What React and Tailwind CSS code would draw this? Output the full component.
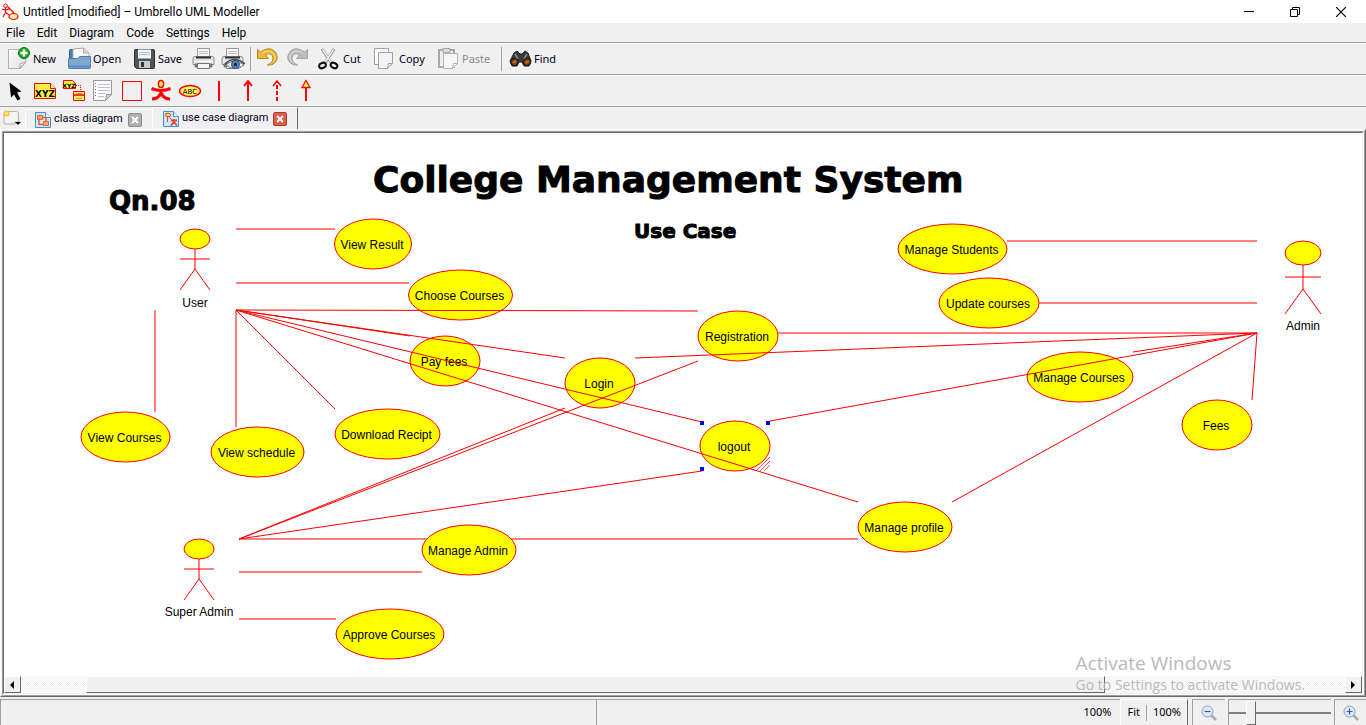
import React from "react";

const RED = "#ff0000";

const useCases = [
  ["View Result", 373, 244, 38.5, 25],
  ["Choose Courses", 460.5, 295, 52, 25],
  ["Pay fees", 445, 361, 35, 25],
  ["Login", 600, 383, 35, 25],
  ["Registration", 738, 336, 40, 25],
  ["View Courses", 125.5, 437, 44.5, 25],
  ["View schedule", 257.5, 452, 46.5, 25],
  ["Download Recipt", 387.5, 434, 52.5, 25],
  ["logout", 735, 446, 35, 25],
  ["Manage profile", 905, 527, 47, 25],
  ["Manage Admin", 469, 550, 47, 25],
  ["Approve Courses", 390, 634, 54, 25],
  ["Manage Students", 952.5, 249, 54.5, 25],
  ["Update courses", 989, 303, 50, 25],
  ["Manage Courses", 1080, 377, 53, 25],
  ["Fees", 1217, 425, 35, 25],
];

const linesBehind = [[239, 539, 858, 539]];

const links = [
  [236, 229, 335, 229],
  [236, 283, 409, 283],
  [236, 310, 698, 311],
  [236, 310, 410, 336],
  [236, 310, 565, 358],
  [236, 310, 702, 422],
  [236, 310, 858, 502],
  [236, 310, 335, 409],
  [236, 310, 236, 427],
  [155, 310, 155, 412],
  [239, 539, 565, 408],
  [239, 539, 698, 361],
  [239, 539, 702, 471],
  [239, 572, 422, 572],
  [239, 619, 336, 619],
  [1007, 241, 1257, 241],
  [1039, 303, 1257, 303],
  [778, 333, 1257, 333],
  [635, 358, 1257, 333],
  [770, 421, 1257, 333],
  [1133, 352, 1257, 333],
  [952, 502, 1257, 333],
  [1252, 400, 1257, 333],
];

const actors = [
  ["User", 195, 229, 10, 302],
  ["Super Admin", 199, 539, 10, 611],
  ["Admin", 1303, 241, 12, 325],
];

function Line({ p }) {
  return <line x1={p[0]} y1={p[1]} x2={p[2]} y2={p[3]} stroke={RED} />;
}

function Actor({ name, x, top, u, labelY }) {
  const w = u === 12 ? 18 : 15;
  return (
    <g stroke={RED} fill="none">
      <ellipse cx={x} cy={top + u} rx={w} ry={u} fill="#ffff00" />
      <path d={`M${x} ${top + 2 * u}V${top + 4 * u}M${x - w} ${top + 3 * u}H${x + w}M${x - w} ${top + 6 * u + 1}L${x} ${top + 4 * u}L${x + w} ${top + 6 * u + 1}`} />
      <text x={x} y={labelY + 5} textAnchor="middle" fill="#000" stroke="none">{name}</text>
    </g>
  );
}

function Diagram() {
  return (
    <svg role="img" aria-label="Use case diagram" width="1358" height="543" viewBox="4 133 1358 543" className="absolute top-0 left-0 font-['Liberation_Sans',sans-serif] text-[12px]">
      {linesBehind.map((p, i) => <Line key={i} p={p} />)}
      {useCases.map(([n, x, y, rx, ry]) => (
        <g key={n}>
          <ellipse cx={x} cy={y} rx={rx} ry={ry} fill="#ffff00" stroke={RED} />
          <text x={x - 1} y={y + 5} textAnchor="middle">{n}</text>
        </g>
      ))}
      {links.map((p, i) => <Line key={i} p={p} />)}
      {actors.map(([n, x, t, u, l]) => <Actor key={n} name={n} x={x} top={t} u={u} labelY={l} />)}
      <path d="M756 471L770 457M760 471L770 461M764 471L770 465" stroke="#ff0000" strokeOpacity=".7" />
      <g fill="#0000ff">
        <rect x="700" y="421" width="4" height="4" />
        <rect x="766" y="421" width="4" height="4" />
        <rect x="700" y="467" width="4" height="4" />
      </g>
    </svg>
  );
}

function Svg({ w = 24, h = 24, children }) {
  return <svg width={w} height={h} viewBox={`0 0 ${w} ${h}`} fill="none" className="shrink-0" aria-hidden="true">{children}</svg>;
}

const AppIcon = () => (
  <Svg w={18} h={18}>
    <circle cx="3.500" cy="2.800" r="1.800" stroke={RED} />
    <path d="M3.500 4.500v5M0 6l3.500 1L8 5.500M3.500 9.500L1 14M3.500 9.500L8 12.500M5.500 3.500L12 10" stroke={RED} strokeWidth="1.200" />
    <ellipse cx="11.500" cy="13.500" rx="4.500" ry="3" fill="#fff3a0" stroke={RED} strokeWidth="1.200" />
  </Svg>
);
const NewIcon = () => (
  <Svg>
    <defs><linearGradient id="sheet" x1="0" y1="0" x2="1" y2="1"><stop stopColor="#ffffff" /><stop offset="1" stopColor="#dedede" /></linearGradient></defs>
    <path d="M.5 2.500h17v13l-5 6H.5z" fill="url(#sheet)" stroke="#b0b0b0" />
    <path d="M11.500 21.500l1-5 5-1z" fill="#f2f2f2" stroke="#a6a6a6" />
    <circle cx="16" cy="6" r="5.500" fill="#25a528" stroke="#0c7a10" />
    <path d="M16 2.500v7M12.500 6h7" stroke="#fff" strokeWidth="2.400" />
  </Svg>
);
const OpenIcon = () => (
  <Svg>
    <path d="M1.500 13V3.500q0-1 1-1H7l1.500 2h11V13z" fill="#4f7cac" stroke="#355f91" />
    <path d="M5 13V2l11-1 5 5v7z" fill="#fbfbfb" stroke="#a9a9a9" />
    <path d="M15.500 1v5H21" fill="#ddd" stroke="#a9a9a9" />
    <path d="M.5 11.500h9l2-2h11v11q0 1-1 1h-20q-1 0-1-1z" fill="#7ea8d2" stroke="#4f7eb2" />
    <path d="M1 19.500h21" stroke="#5b89ba" strokeWidth="2" />
  </Svg>
);
const SaveIcon = () => (
  <Svg>
    <path d="M2 2.500h18.500q1 0 1 1v17q0 1-1 1h-17l-2-2v-16q0-1 .5-1z" fill="#50545a" stroke="#303236" />
    <path d="M5 2.500h13v9H5z" fill="#f4f8fc" />
    <path d="M6 5.500h11M6 7.500h11" stroke="#a8c4e4" />
    <path d="M6 14h11v7H6z" fill="#c8c8c8" />
    <path d="M8 15h3v5H8z" fill="#333" />
  </Svg>
);
function PrintIcon({ eye }) {
  return (
    <Svg>
      <path d="M5.500 1.500h12v9h-12z" fill="#f7f7f7" stroke="#999" />
      <path d="M7 4.500h9M7 6.500h9" stroke="#bbb" />
      <path d="M3 9.500h17q2 0 2 2v6H1v-6q0-2 2-2z" fill="#e2e2e2" stroke="#8d8d8d" />
      <path d="M4 10.500h15" stroke="#333" strokeWidth="2" />
      <path d="M2 14.500h19" stroke="#fff" />
      <path d="M3 17h17v3H3z" fill="#777" stroke="#777" />
      <path d="M5.500 16.500h12v5h-12z" fill="#f4f4f4" stroke="#777" />
      {eye && <><path d="M5 18q8-8 18 0-9 7-18 0z" fill="#eee" stroke="#777" /><circle cx="14.500" cy="17.500" r="4" fill="#4f8cc4" stroke="#224f80" /><circle cx="14.500" cy="17.500" r="1.700" fill="#10243c" /><path d="M4 17q9-9 20 0" stroke="#444" strokeWidth="1.500" /></>}
    </Svg>
  );
}
function UndoIcon({ redo }) {
  const c = redo ? "#bcbcbc" : "#e9b93c";
  const s = redo ? "#a4a4a4" : "#b98812";
  return (
    <Svg>
      <g transform={redo ? "translate(24 0) scale(-1 1)" : undefined}>
        <path d="M1.500 2.500l3 2.500q8-6 14-1 5 6 1 11-3 4-8 3 7-3 5-9-3-4-7-1l3 3.500h-11z" fill={c} stroke={s} strokeLinejoin="round" />
        <path d="M6 6q7-4 11 0 4 5 0 9" stroke="#ffffff" strokeOpacity=".5" />
      </g>
    </Svg>
  );
}
const CutIcon = () => (
  <Svg>
    <path d="M4 2l9.500 14M16 2L7 16" stroke="#888" strokeWidth="3" />
    <path d="M4.500 2.500l9 13M15.500 2.500l-8.500 13" stroke="#eee" strokeWidth="1.600" />
    <ellipse cx="4.500" cy="18.500" rx="3.500" ry="2.500" transform="rotate(-25 4.500 18.500)" stroke="#111" strokeWidth="2" />
    <ellipse cx="16" cy="18.500" rx="3.500" ry="2.500" transform="rotate(25 16 18.500)" stroke="#111" strokeWidth="2" />
  </Svg>
);
const CopyIcon = () => (
  <Svg>
    <path d="M.5 1.500h14v16H.5z" fill="#fafafa" stroke="#a0a0a0" />
    <path d="M4.500 5.500h14v11l-5 5h-9z" fill="#f3f3f3" stroke="#a0a0a0" />
    <path d="M13.500 21.500l1-5 4 0z" fill="#fff" stroke="#a0a0a0" />
  </Svg>
);
const PasteIcon = () => (
  <Svg>
    <path d="M2 3h15v17H2z" fill="#eee" stroke="#a8a8a8" strokeWidth="2" />
    <path d="M6 1.500h7v4H6z" fill="#ddd" stroke="#a8a8a8" />
    <path d="M6.500 6.500h14v10l-5 5h-9z" fill="#f6f6f6" stroke="#b4b4b4" />
    <path d="M15.500 21.500l1-5h4z" fill="#fff" stroke="#b4b4b4" />
  </Svg>
);
const FindIcon = () => (
  <Svg>
    <path d="M5 6l3-2 3 3h2l3-3 3 2 3 8-2 5h-5l-2-4h-3l-2 4H3l-2-5z" fill="#3a3a3a" stroke="#222" />
    <path d="M6 7l3 5M18 7l-3 5" stroke="#888" strokeWidth="1.500" />
    <circle cx="5.500" cy="15" r="3.500" fill="#8a4512" stroke="#222" strokeWidth="1.500" />
    <circle cx="18" cy="15" r="3.500" fill="#8a4512" stroke="#222" strokeWidth="1.500" />
    <path d="M4 16l3-2M16.500 16l3-2" stroke="#d0803c" strokeWidth="1.500" />
  </Svg>
);

const SelectTool = () => <Svg><path d="M5.500 3.500l12 9-4.500 1 3.500 6.500-3 1.500-3.500-6-3 3z" fill="#000" /></Svg>;
const XyzTool = () => (
  <Svg>
    <path d="M1.500 4.500h16l5 5v10h-21z" fill="#ffee44" stroke={RED} />
    <path d="M17.500 4.500v5h5" fill="#ffffaa" stroke={RED} />
    <text x="12" y="18" textAnchor="middle" fontSize="9" fontWeight="bold" fill="#000" fontFamily="DejaVu Sans">XYZ</text>
  </Svg>
);
const AnchorTool = () => (
  <Svg>
    <path d="M1.500 1.500h9l3 3v5h-12z" fill="#ffee44" stroke={RED} />
    <text x="7" y="9" textAnchor="middle" fontSize="6" fontWeight="bold" fill="#000" fontFamily="DejaVu Sans">XYZ</text>
    <path d="M14 6.500h4.500v6" stroke={RED} strokeDasharray="1 1" />
    <path d="M11.500 12.500h11v9h-11z" fill="#ffee66" stroke={RED} />
    <path d="M11.500 16h11" stroke={RED} strokeWidth="1.500" />
    <path d="M14 14.500h6M14 19.500h6" stroke="#c79a30" />
  </Svg>
);
const NoteTool = () => (
  <Svg>
    <path d="M2.500 1.500h18v14l-6 6h-12z" fill="#fbfbfb" stroke="#999" />
    <path d="M14.500 21.500l1-6h5z" fill="#ccc" stroke="#999" />
    <path d="M7 5.500h12M7 8.500h12M7 11.500h12M7 14.500h8M7 17.500h6" stroke="#bcc2d0" />
    <path d="M4.500 4v15" stroke="#777" strokeDasharray="1 2" />
  </Svg>
);
const BoxTool = () => <Svg><path d="M2.500 2.500h19v19h-19z" stroke={RED} /></Svg>;
const ActorTool = () => (
  <Svg>
    <path d="M2.500 9.500q9.500 4 19 0M12 10v5M12 14q-3 6-9 6M12 14q3 6 9 6" stroke={RED} strokeWidth="3" />
    <ellipse cx="12" cy="5" rx="2.600" ry="3.500" fill="#ffee44" stroke={RED} strokeWidth="1.400" />
  </Svg>
);
const UseCaseTool = () => (
  <Svg>
    <ellipse cx="12" cy="12" rx="10.500" ry="5.500" fill="#ffee66" stroke={RED} strokeWidth="1.400" />
    <text x="12" y="14.500" textAnchor="middle" fontSize="7" fill="#000" fontFamily="DejaVu Sans">ABC</text>
  </Svg>
);
const LineTool = () => <Svg><path d="M12 2v20" stroke={RED} strokeWidth="2" /></Svg>;
const ArrowTool = () => <Svg><path d="M12 2v20M8 7l4-5 4 5" stroke={RED} strokeWidth="2" /></Svg>;
const DashTool = () => <Svg><path d="M12 22v-20" stroke={RED} strokeWidth="2" strokeDasharray="4 2" /><path d="M8 7l4-5 4 5" stroke={RED} strokeWidth="1.500" /></Svg>;
const GeneralTool = () => <Svg><path d="M12 8v14" stroke={RED} strokeWidth="2" /><path d="M8 8.500l4-7 4 7z" fill="#ffff55" stroke={RED} strokeWidth="1.300" /></Svg>;

const NewTabIcon = () => (
  <Svg w={18} h={16}>
    <path d="M3 1.500h10.500q2 0 2 2V12H12v2H2.500q-1.500 0-1.500-2V4" fill="#f4f4f4" stroke="#b0b0b0" />
    <circle cx="3.500" cy="3.500" r="3" fill="#f5c533" />
    <circle cx="3.500" cy="3.500" r="1.300" fill="#fff0a8" />
    <path d="M12 12h6l-3 3z" fill="#000" />
  </Svg>
);
function DiagramIcon({ useCase }) {
  return (
    <Svg w={16} h={16}>
      <path d="M.5.500h10l5 5v10H.5z" fill="#cfe7fa" stroke="#3e93d8" />
      <path d="M10.500.500v5h5" fill="#fff" stroke="#3e93d8" />
      {useCase ? (
        <><ellipse cx="5" cy="4" rx="3" ry="1.800" fill="#f6d36b" stroke="#d8552b" /><path d="M4.500 6v5M6 6l3 3" stroke="#e04a2f" /><path d="M11 8v4M8 9.500h6M11 11l-3 3.500M11 11l3 3.500" stroke="#e04a2f" strokeWidth="1.800" /></>
      ) : (
        <><path d="M2.500 3.500h5v4h-5zM8.500 9.500h5v4h-5z" fill="#f9a77c" stroke="#e0622f" /><path d="M4 8v4.500h4M8 5.500h3V9" stroke="#e0622f" strokeWidth="1.500" /></>
      )}
    </Svg>
  );
}
function CloseBadge({ active }) {
  return (
    <Svg w={14} h={14}>
      <rect x=".5" y=".5" width="13" height="13" rx="1.500" fill={active ? "#dd5f4b" : "#b0b0b0"} stroke={active ? "#b23a28" : "#8e8e8e"} />
      <path d="M4 4l6 6M10 4l-6 6" stroke="#fff" strokeWidth="2" />
    </Svg>
  );
}
function ZoomIcon({ plus }) {
  return (
    <Svg w={16} h={16}>
      <path d="M10 10l5 5" stroke="#aaa" strokeWidth="2.500" />
      <circle cx="6.500" cy="6.500" r="5.500" fill="#dceaf8" stroke="#8aa0bb" />
      <path d={plus ? "M3.500 6.500h6M6.500 3.500v6" : "M3.500 6.500h6"} stroke="#2f5fa8" strokeWidth="1.200" />
    </Svg>
  );
}

function ToolButton({ icon, label, className = "", disabled }) {
  return (
    <button type="button" disabled={disabled} aria-label={label} className={`flex h-6 items-center gap-[1px] whitespace-nowrap disabled:text-[#8a8a8a] ${className}`}>
      {icon}
      <span>{label}</span>
    </button>
  );
}
function IconButton({ icon, name }) {
  return <button type="button" aria-label={name} className="flex size-6 items-center justify-center">{icon}</button>;
}

const tools = [
  ["Select", <SelectTool />], ["Text", <XyzTool />], ["Anchor", <AnchorTool />], ["Note", <NoteTool />],
  ["Box", <BoxTool />], ["Actor", <ActorTool />], ["Use case", <UseCaseTool />], ["Association", <LineTool />],
  ["Directional association", <ArrowTool />], ["Dependency", <DashTool />], ["Generalization", <GeneralTool />],
];

const headingFace = "absolute font-['DejaVu_Sans',sans-serif] font-bold whitespace-nowrap [-webkit-text-stroke:1px_black]";

export default function App() {
  return (
    <div className="flex h-screen min-h-0 flex-col overflow-hidden bg-[#f0f0f0] font-['Noto_Sans',sans-serif] text-[11px] text-[#000020]">
      <header className="flex h-[23px] shrink-0 items-center bg-white pr-[2px] pl-[2px] font-['Roboto',sans-serif] text-[12px] text-black">
        <AppIcon />
        <h1 className="ml-[3px] grow">Untitled [modified] – Umbrello UML Modeller</h1>
        <button type="button" aria-label="Minimize" className="flex h-full w-[46px] items-center justify-center"><Svg w={10} h={10}><path d="M0 4.500h10" stroke="#000" /></Svg></button>
        <button type="button" aria-label="Restore" className="flex h-full w-[46px] items-center justify-center"><Svg w={10} h={10}><path d="M.5 2.500h7v7h-7zM2.500 2V.500h7v7H8" stroke="#000" /></Svg></button>
        <button type="button" aria-label="Close" className="flex h-full w-[46px] items-center justify-center"><Svg w={10} h={10}><path d="M0 0l10 10M10 0L0 10" stroke="#000" strokeWidth="1.200" /></Svg></button>
      </header>

      <nav className="flex h-5 shrink-0 items-center gap-3 border-b border-[#a0a0a0] pl-[6px] font-['Roboto',sans-serif] text-[12px] text-black">
        {["File", "Edit", "Diagram", "Code", "Settings", "Help"].map((m) => <button type="button" key={m}>{m}</button>)}
      </nav>

      <div className="flex h-8 shrink-0 items-center border-t border-b border-t-white border-b-[#a0a0a0] pl-2">
        <ToolButton icon={<NewIcon />} label="New" className="w-[60px]" />
        <ToolButton icon={<OpenIcon />} label="Open" className="w-[65px]" />
        <ToolButton icon={<SaveIcon />} label="Save" className="w-[59px]" />
        <div className="flex gap-[5px]">
          <IconButton name="Print" icon={<PrintIcon />} />
          <IconButton name="Print preview" icon={<PrintIcon eye />} />
        </div>
        <div className="mx-[5px] h-6 w-px bg-[#a0a0a0]" />
        <div className="flex gap-[5px]">
          <IconButton name="Undo" icon={<UndoIcon />} />
          <IconButton name="Redo" icon={<UndoIcon redo />} />
        </div>
        <ToolButton icon={<CutIcon />} label="Cut" className="ml-[9px] w-[56px]" />
        <ToolButton icon={<CopyIcon />} label="Copy" className="w-[63px]" />
        <ToolButton icon={<PasteIcon />} label="Paste" className="w-[64px]" disabled />
        <div className="h-6 w-px bg-[#a0a0a0]" />
        <ToolButton icon={<FindIcon />} label="Find" className="ml-[7px]" />
      </div>

      <div className="flex h-8 shrink-0 items-center gap-[5px] border-t border-b border-t-white border-b-[#a0a0a0] pl-1">
        {tools.map(([name, icon]) => <IconButton key={name} name={name} icon={icon} />)}
      </div>

      <div role="tablist" className="flex h-[22px] shrink-0 items-stretch pl-[3px] font-['Roboto',sans-serif]">
        <button type="button" aria-label="New tab" className="flex w-[22px] items-center"><NewTabIcon /></button>
        <div className="mt-[2px] flex w-[127px] items-center border-t border-l border-white pl-[9px]">
          <button type="button" role="tab" className="flex items-center gap-[3px] whitespace-nowrap"><DiagramIcon />class diagram</button>
          <button type="button" aria-label="Close class diagram" className="ml-[5px]"><CloseBadge /></button>
        </div>
        <div className="flex w-[146px] items-center border-t border-r border-l border-t-white border-r-[#696969] border-l-white pl-[10px]">
          <button type="button" role="tab" aria-selected="true" className="flex items-center gap-[3px] whitespace-nowrap"><DiagramIcon useCase />use case diagram</button>
          <button type="button" aria-label="Close use case diagram" className="ml-[5px]"><CloseBadge active /></button>
        </div>
      </div>

      <main className="flex min-h-0 grow flex-col border border-t-white border-r-[#696969] border-b-[#696969] border-l-white">
        <div className="flex min-h-0 grow flex-col border border-t-[#f0f0f0] border-r-[#a0a0a0] border-b-[#a0a0a0] border-l-[#f0f0f0]">
          <div className="relative flex min-h-0 grow flex-col border border-t-[#a0a0a0] border-r-white border-b-white border-l-[#a0a0a0] bg-white">
            <div className="flex min-h-0 grow flex-col border border-t-[#696969] border-r-[#f0f0f0] border-b-[#f0f0f0] border-l-[#696969]">
              <section className="relative min-h-0 grow overflow-hidden text-black">
                <Diagram />
                <h2 className={`${headingFace} top-[50px] left-[105px] text-[26px] leading-9`}>Qn.08</h2>
                <h2 className={`${headingFace} top-[24px] left-[369px] text-[36px] leading-[46px]`}>College Management System</h2>
                <h3 className={`${headingFace} top-[84px] left-[630px] text-[20px] leading-7`}>Use Case</h3>
              </section>
              <div className="flex h-[17px] shrink-0 bg-[conic-gradient(#fff_25%,#f0f0f0_0_50%,#fff_0_75%,#f0f0f0_0)] bg-size-[2px_2px]">
                <button type="button" aria-label="Scroll left" className="flex w-[17px] items-center justify-center border border-t-white border-r-[#696969] border-b-[#696969] border-l-white bg-[#f0f0f0]"><Svg w={5} h={8}><path d="M4 0v8L0 4z" fill="#000" /></Svg></button>
                <div className="w-[65px]" />
                <div className="grow-[1018] border border-t-white border-r-[#696969] border-b-[#696969] border-l-white bg-[#f0f0f0]" />
                <div className="grow-[240]" />
                <button type="button" aria-label="Scroll right" className="flex w-[17px] items-center justify-center border border-t-white border-r-[#696969] border-b-[#696969] border-l-white bg-[#f0f0f0]"><Svg w={5} h={8}><path d="M0 0v8l4-4z" fill="#000" /></Svg></button>
              </div>
            </div>
            <div className="pointer-events-none absolute right-[58px] bottom-[-1px] font-['Open_Sans',sans-serif] text-[#b9b9b9]">
              <p className="text-[19px] leading-6">Activate Windows</p>
              <p className="text-[14px] leading-5">Go to Settings to activate Windows.</p>
            </div>
          </div>
        </div>
      </main>

      <footer className="flex h-[28px] shrink-0 pt-[2px] text-black">
        <div className="w-[596px] border-t border-l border-[#a0a0a0]" />
        <div className="flex grow items-center justify-end border-t border-l border-[#a0a0a0] pr-[9px]">100%</div>
        <div className="flex items-center border border-t-white border-r-[#696969] border-b-0 border-l-white">
          <button type="button" className="px-[6px]">Fit</button>
          <span className="h-4 w-px bg-[#a0a0a0]" />
          <button type="button" className="px-[6px]">100%</button>
        </div>
        <button type="button" aria-label="Zoom out" className="ml-1 flex w-[33px] items-center justify-center border-t border-l border-[#a0a0a0]"><ZoomIcon /></button>
        <label className="ml-[3px] flex w-[103px] items-center border-t border-l border-[#a0a0a0]">
          <input type="range" aria-label="Zoom" defaultValue="18" className="h-6 w-full appearance-none bg-transparent [&::-webkit-slider-runnable-track]:h-[2px] [&::-webkit-slider-runnable-track]:bg-[#808080] [&::-webkit-slider-thumb]:-mt-[11px] [&::-webkit-slider-thumb]:h-6 [&::-webkit-slider-thumb]:w-[10px] [&::-webkit-slider-thumb]:appearance-none [&::-webkit-slider-thumb]:border [&::-webkit-slider-thumb]:border-t-white [&::-webkit-slider-thumb]:border-r-[#696969] [&::-webkit-slider-thumb]:border-b-[#696969] [&::-webkit-slider-thumb]:border-l-white [&::-webkit-slider-thumb]:bg-[#f0f0f0]" />
        </label>
        <button type="button" aria-label="Zoom in" className="ml-[3px] flex w-8 items-center justify-center border-t border-l border-[#a0a0a0]"><ZoomIcon plus /></button>
      </footer>
    </div>
  );
}
